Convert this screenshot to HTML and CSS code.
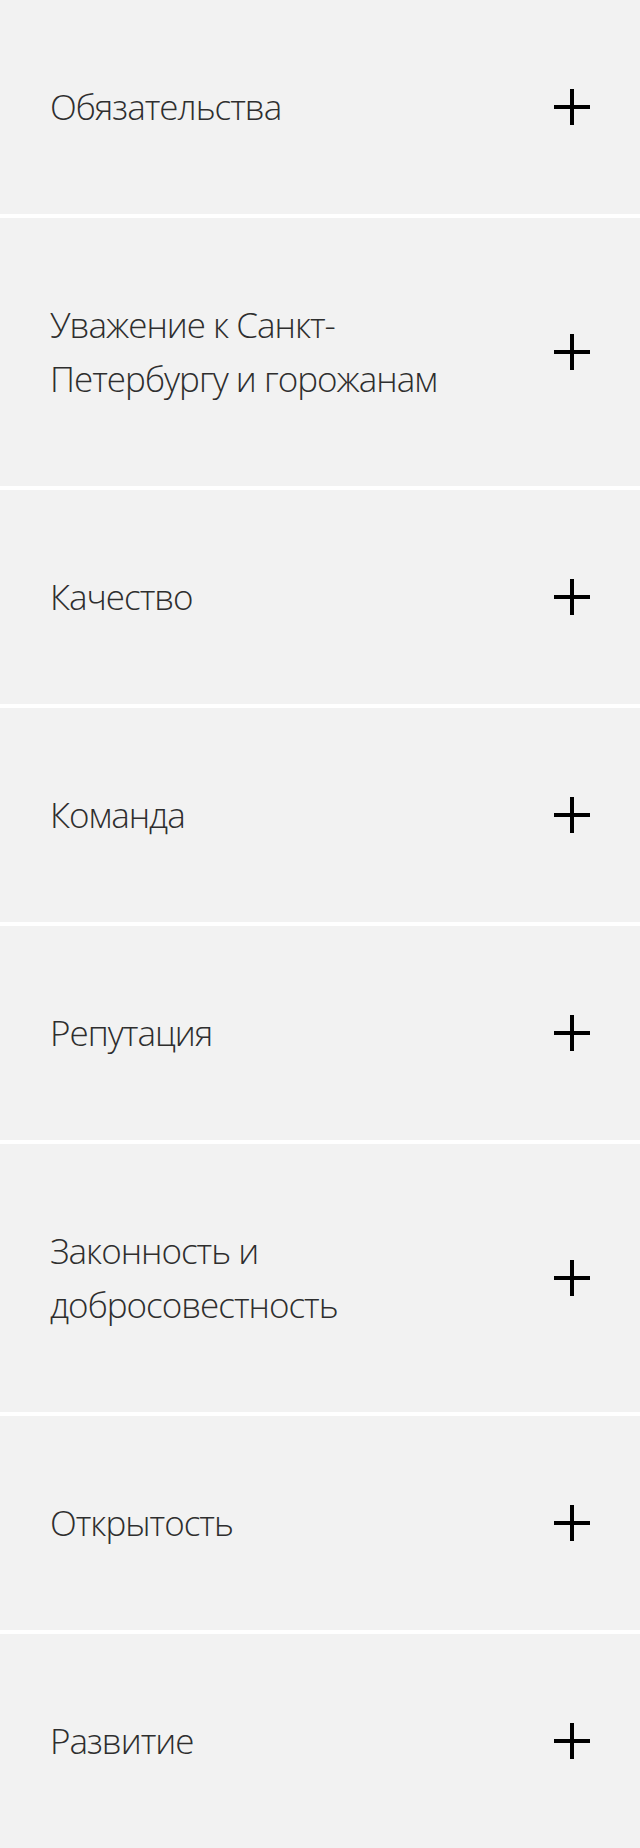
FILE: index.html
```html
<!DOCTYPE html>
<html lang="ru">
<head>
<meta charset="utf-8">
<title>Ценности</title>
<link rel="stylesheet" href="styles.css">
</head>
<body>
<ul class="accordion">
  <li class="item"><span class="title">Обязательства</span><span class="plus"></span></li>
  <li class="item"><span class="title">Уважение к Санкт-Петербургу и горожанам</span><span class="plus"></span></li>
  <li class="item"><span class="title">Качество</span><span class="plus"></span></li>
  <li class="item"><span class="title">Команда</span><span class="plus"></span></li>
  <li class="item"><span class="title">Репутация</span><span class="plus"></span></li>
  <li class="item"><span class="title">Законность и добросовестность</span><span class="plus"></span></li>
  <li class="item"><span class="title">Открытость</span><span class="plus"></span></li>
  <li class="item"><span class="title">Развитие</span><span class="plus"></span></li>
</ul>
</body>
</html>
```

FILE: styles.css
```css
html, body {
  margin: 0;
  padding: 0;
  background: #ffffff;
}
.accordion {
  list-style: none;
  margin: 0;
  padding: 0;
  display: flex;
  flex-direction: column;
  gap: 4px;
}
.item {
  background: #f2f2f2;
  display: flex;
  align-items: center;
  justify-content: space-between;
  padding: 80px 50px 80px 50px;
}
.title {
  font-family: "Open Sans", "Noto Sans", sans-serif;
  font-weight: 300;
  font-size: 35px;
  line-height: 54px;
  color: #2e2e2e;
  max-width: 420px;
  letter-spacing: -1px;
}
.plus {
  position: relative;
  width: 36px;
  height: 36px;
  flex: none;
}
.plus::before,
.plus::after {
  content: "";
  position: absolute;
  background: #000;
}
.plus::before {
  left: 16px;
  top: 0;
  width: 4px;
  height: 36px;
}
.plus::after {
  left: 0;
  top: 16px;
  width: 36px;
  height: 4px;
}
```
